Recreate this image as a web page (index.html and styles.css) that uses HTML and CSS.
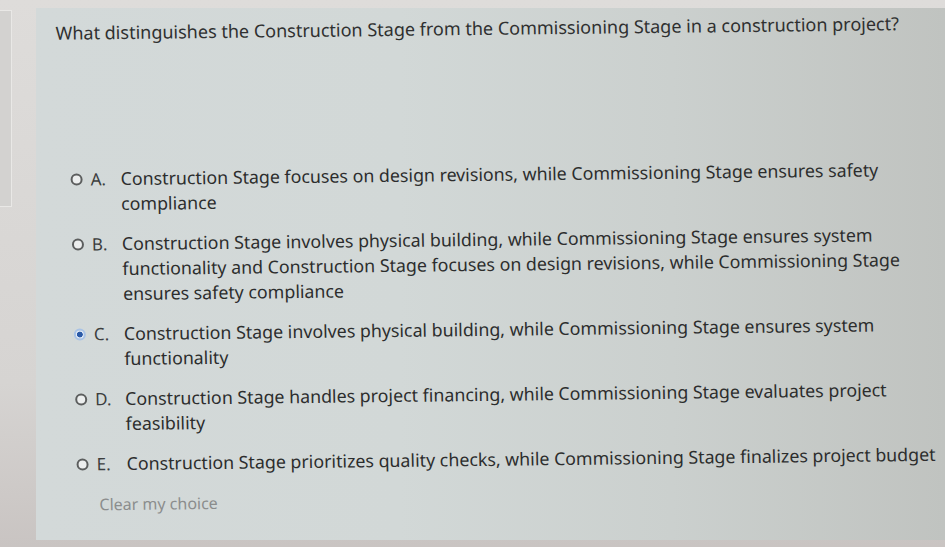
FILE: index.html
```html
<!DOCTYPE html>
<html lang="en">
<head>
<meta charset="utf-8">
<title>Question</title>
<link rel="stylesheet" href="styles.css">
</head>
<body>
<div class="page">
  <div class="side"></div>
  <div class="panel">
    <div class="content">
      <p class="question">What distinguishes the Construction Stage from the Commissioning Stage in a construction project?</p>
      <div class="options">
        <label class="option">
          <span class="radio"></span>
          <span class="letter">A.</span>
          <span class="text">Construction Stage focuses on design revisions, while Commissioning Stage ensures safety compliance</span>
        </label>
        <label class="option">
          <span class="radio"></span>
          <span class="letter">B.</span>
          <span class="text">Construction Stage involves physical building, while Commissioning Stage ensures system functionality and Construction Stage focuses on design revisions, while Commissioning Stage ensures safety compliance</span>
        </label>
        <label class="option">
          <span class="radio checked"></span>
          <span class="letter">C.</span>
          <span class="text">Construction Stage involves physical building, while Commissioning Stage ensures system functionality</span>
        </label>
        <label class="option">
          <span class="radio"></span>
          <span class="letter">D.</span>
          <span class="text">Construction Stage handles project financing, while Commissioning Stage evaluates project feasibility</span>
        </label>
        <label class="option">
          <span class="radio"></span>
          <span class="letter">E.</span>
          <span class="text">Construction Stage prioritizes quality checks, while Commissioning Stage finalizes project budget</span>
        </label>
      </div>
      <a class="clear">Clear my choice</a>
    </div>
  </div>
</div>
</body>
</html>
```

FILE: styles.css
```css
html, body {
  margin: 0;
  padding: 0;
}

body {
  width: 945px;
  height: 547px;
  overflow: hidden;
  background: linear-gradient(180deg, #dedcda 0%, #d6d4d2 70%, #c9c4c2 100%);
  font-family: "Noto Sans", "DejaVu Sans", sans-serif;
}

.page {
  display: flex;
  align-items: flex-start;
  height: 547px;
}

.side {
  flex: 0 0 11px;
  height: 195px;
  margin-top: 10px;
  border: 1px solid #e9e8e6;
  border-left: none;
  background: #d3d2d0;
}

.panel {
  flex: 1;
  height: 532px;
  margin: 8px 0 0 24px;
  background: linear-gradient(90deg, #d3d9d9 0%, #d2d8d7 40%, #cbd0ce 70%, #c0c3c0 100%);
  overflow: hidden;
}

.content {
  padding: 13px 0 0 19px;
  transform: rotate(-0.65deg) skewX(0.55deg);
  transform-origin: 0 0;
}

.question {
  margin: 0;
  font-size: 18px;
  line-height: 24px;
  color: #2f3030;
  white-space: nowrap;
}

.options {
  margin-top: 122px;
  display: flex;
  flex-direction: column;
  gap: 15px;
}

.option {
  display: flex;
  align-items: flex-start;
  padding-left: 12px;
}

.radio {
  flex: 0 0 auto;
  box-sizing: border-box;
  width: 12px;
  height: 12px;
  margin-top: 7px;
  border: 2px solid #5c5e5e;
  border-radius: 50%;
  background: #eceeee;
}

.radio.checked {
  border: 2px solid #a9c3e6;
  background: radial-gradient(circle, #2a5aa8 0 2.6px, #dfe8f4 3.2px);
}

.letter {
  flex: 0 0 auto;
  width: 30px;
  margin-left: 8px;
  font-size: 17px;
  line-height: 25px;
  color: #3c3e3e;
}

.text {
  width: 815px;
  font-size: 17.8px;
  line-height: 25px;
  color: #2c2d2d;
}

.clear {
  display: block;
  margin: 16px 0 0 34px;
  font-size: 16px;
  line-height: 24px;
  color: #8b8d8d;
}
```
